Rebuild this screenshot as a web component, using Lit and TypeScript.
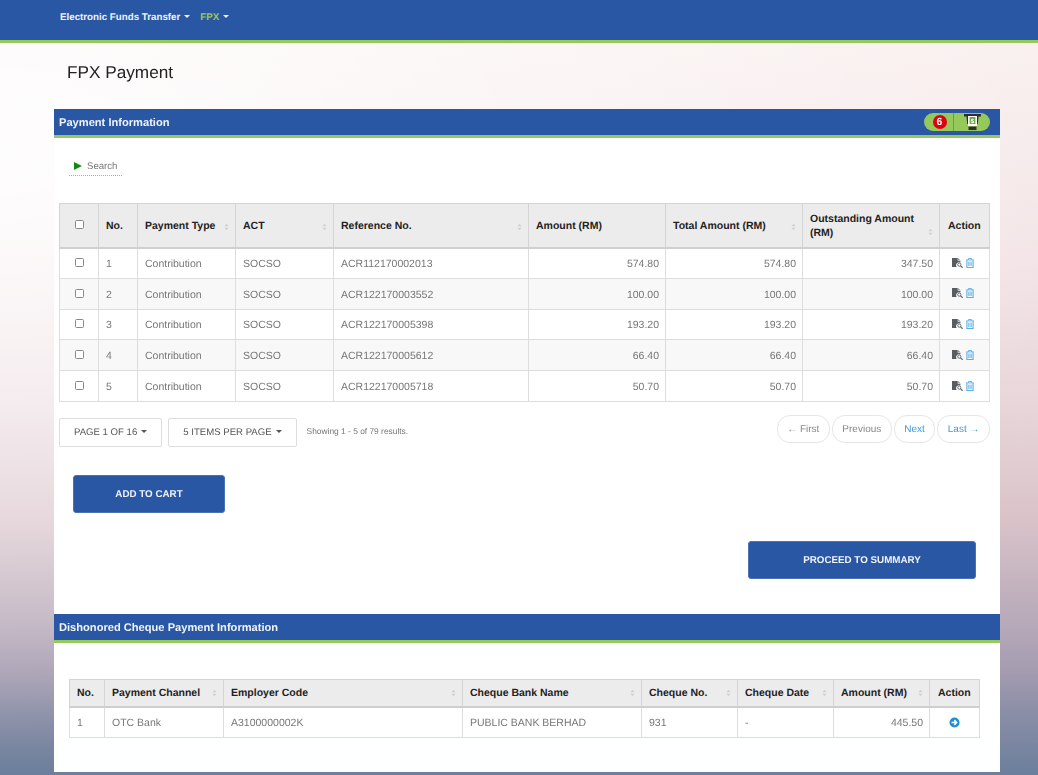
import { LitElement, html, css, svg } from "lit";
import { customElement } from "lit/decorators.js";

const mainCols = [39, 39, 98, 98, 195, 137, 137, 137, 50];
const mainHead: [string, boolean][] = [
  ["No.", false], ["Payment Type", true], ["ACT", true], ["Reference No.", true],
  ["Amount (RM)", false], ["Total Amount (RM)", true], ["Outstanding Amount (RM)", true], ["Action", false],
];
const rows = [
  ["1", "ACR112170002013", "574.80", "574.80", "347.50"],
  ["2", "ACR122170003552", "100.00", "100.00", "100.00"],
  ["3", "ACR122170005398", "193.20", "193.20", "193.20"],
  ["4", "ACR122170005612", "66.40", "66.40", "66.40"],
  ["5", "ACR122170005718", "50.70", "50.70", "50.70"],
];
const chequeCols = [35, 119, 239, 179, 96, 96, 96, 50];
const chequeHead: [string, boolean][] = [
  ["No.", false], ["Payment Channel", true], ["Employer Code", true], ["Cheque Bank Name", true],
  ["Cheque No.", true], ["Cheque Date", true], ["Amount (RM)", true], ["Action", false],
];

const sortIcon = svg`<svg class="sort" viewBox="0 0 6 9" width="5" height="8"><path d="M3 0.5 5.4 3.6H.6zM3 8.5 .6 5.4H5.4z" fill="#d0d0d0"/></svg>`;
const sortIconLow = svg`<svg class="sort low" viewBox="0 0 6 9" width="5" height="8"><path d="M3 0.5 5.4 3.6H.6zM3 8.5 .6 5.4H5.4z" fill="#d0d0d0"/></svg>`;
const docIcon = svg`<svg class="act" viewBox="0 0 11 10" width="11" height="10"><path d="M0 0h6l2.4 2.4v2.2A3 3 0 0 0 4.6 9H0z" fill="#5a5d60"/><path d="M6 .2v2.4h2.4" fill="none" stroke="#fff" stroke-width=".7"/><circle cx="7.3" cy="6.6" r="1.6" fill="none" stroke="#6a6d70" stroke-width="1"/><path d="M8.5 7.8 10.6 9.8" stroke="#6a6d70" stroke-width="1.2"/></svg>`;
const trashIcon = svg`<svg class="act" viewBox="0 0 8 10" width="8" height="10"><path d="M0 1.9h8M2.4 1.8V.5h3.2v1.3" fill="none" stroke="#5aaee5" stroke-width=".9"/><path d="M.9 2.2v7.3h6.2V2.2" fill="none" stroke="#5aaee5" stroke-width="1.1"/><path d="M2.7 3.6v4.4M4 3.6v4.4M5.3 3.6v4.4" stroke="#5aaee5" stroke-width=".8"/></svg>`;
const goIcon = svg`<svg class="go" viewBox="0 0 12 12" width="11" height="11"><circle cx="6" cy="6" r="5.5" fill="#1f8ed8"/><path d="M2.8 6H8M5.8 3.4 8.4 6 5.8 8.6" fill="none" stroke="#fff" stroke-width="1.6"/></svg>`;
const atmIcon = svg`<svg class="atm" viewBox="0 0 17 16" width="17" height="16"><path d="M0 0h17v2.4h-2.5L13.8 10h-1V2.4H4.2V10h-1L2.5 2.4H0z" fill="#2e2e2e"/><path d="M4 2h9v10H4z" fill="#fff"/><rect x="5.6" y="3" width="5.8" height="7" fill="#6fa84a"/><text x="8.5" y="8.6" font-size="6" font-weight="700" text-anchor="middle" fill="#fff" font-family="Liberation Sans">$</text><rect x="4.5" y="12.6" width="8" height="3.4" fill="#2e2e2e"/></svg>`;

@customElement("app-root")
export class AppRoot extends LitElement {
  static styles = css`
    :host {
      display: block; height: 775px; overflow: hidden;
      font-family: "Liberation Sans", Arial, sans-serif; color: #777;
      text-rendering: geometricPrecision;
      background:
        radial-gradient(ellipse 1100px 600px at 0 150px, rgba(255,255,255,.92), rgba(255,255,255,0)),
        linear-gradient(180deg, #f9f0ef 5%, #f3e4e6 34%, #e8d6da 52%, #d9c3c9 67%, #b5a8b8 81%, #a59cb0 86.4%, #8a8ea6 92%, #6b7f9c 100%);
    }
    * { box-sizing: border-box; }
    .nav {
      height: 43px; background: #2a57a3; border-bottom: 3px solid #95c95c;
      padding: 11px 0 0 60px; display: flex; gap: 10px; opacity: .999;
      font-size: 9.75px; font-weight: 700; color: #eef2f8; line-height: 13px;
    }
    .nav .green { color: #95c95c; }
    .caret {
      display: inline-block; width: 0; height: 0; margin-left: 4px; vertical-align: 2px;
      border-left: 3px solid transparent; border-right: 3px solid transparent; border-top: 3px solid currentColor;
    }
    .nav .green .caret { color: #eef2f8; }
    .wrap { margin: 0 38px 0 54px; opacity: .999; }
    .title-bar { height: 66px; padding: 19px 0 0 13px; }
    h1 { margin: 0; font-size: 17.2px; font-weight: 400; line-height: 21px; color: #222; }
    .panel { background: #fff; height: 663px; display: flex; flex-direction: column; }
    .phead {
      height: 29px; flex: none; background: #2a57a3; border-bottom: 3px solid #95c95c;
      color: #f1f4f9; font-weight: 700; font-size: 11.12px; line-height: 28px;
      padding: 0 10px 0 5px; display: flex; justify-content: space-between;
    }
    .pill {
      width: 66px; height: 18px; margin-top: 4px; border-radius: 9px; background: #95c95c;
      display: flex; align-items: center;
    }
    .pill .left { width: 30px; height: 100%; display: flex; align-items: center; justify-content: center; border-right: 1px solid #6f9f45; padding-left: 2px; }
    .pill .right { flex: 1; display: flex; align-items: center; justify-content: center; }
    .atm { display: block; }
    .badge {
      width: 14px; height: 14px; border-radius: 50%; background: #e0000f; color: #fff;
      font-size: 10.5px; font-weight: 700; line-height: 14px; text-align: center;
    }
    .search-row { padding: 19px 0 0 15px; height: 65px; flex: none; }
    .search {
      display: inline-flex; align-items: center; gap: 5px; height: 18px; padding: 0 5px 0 5px;
      border-bottom: 1px dotted #aaa; font-size: 9.6px; color: #777;
    }
    .tri { width: 0; height: 0; border-left: 8px solid #128a12; border-top: 4px solid transparent; border-bottom: 4px solid transparent; }
    table {
      border-collapse: collapse; table-layout: fixed; font-size: 10.5px; background: #fff;
    }
    .t1 { margin-left: 5px; width: 930px; }
    .t2 { margin-left: 15px; width: 910px; }
    th, td { border: 1px solid #ddd; padding: 0 7px; }
    td.r { padding-right: 6px; }
    th { border-color: #d4d4d4; border-bottom: 2px solid #cfcfcf; background: #ececec; color: #222; font-weight: 700; text-align: left; line-height: 14px; position: relative; }
    th:last-child { padding-left: 8px; }
    .t1 th { height: 44px; padding-top: 2px; }
    .t2 th { height: 28px; }
    .t1 td { height: 30.8px; padding-top: 2px; }
    .t2 td { height: 30px; }
    .t1, .t2 { border: 1px solid #ccc; }
    .t1 tbody tr:nth-child(even) td { background: #f8f8f8; }
    .r { text-align: right; }
    .c { text-align: center; }
    th.sorted { padding-right: 17px; }
    .sort { position: absolute; right: 6px; bottom: 16px; }
    .sort.low { bottom: 11px; }
    .t2 .sort { bottom: 9px; }
    .cb { appearance: none; margin: 0 auto 3px; width: 9px; height: 9px; border: 1px solid #888; border-radius: 1.5px; background: #fff; display: block; }
    .acts { display: flex; align-items: center; justify-content: center; gap: 3px; margin: 0 3px 3px 0; }
    .act { display: block; }
    .go { display: block; margin: 0 auto; }
    .pager { height: 73px; flex: none; margin: 0 10px 0 5px; display: flex; align-items: flex-start; }
    .ddl {
      height: 29px; margin-top: 16px; border: 1px solid #ddd; border-radius: 2px; padding: 0 14px;
      font-size: 9.6px; line-height: 27px; color: #555; margin-right: 6px;
    }
    .count { font-size: 8.4px; color: #777; margin: 24px 0 0 4px; line-height: 11px; }
    .links { margin-left: auto; margin-top: 13px; display: flex; gap: 2px; }
    .links span {
      height: 28px; border: 1px solid #e6e6e6; border-radius: 13px; padding: 0 9.5px;
      font-size: 10px; line-height: 27px; color: #888;
    }
    .links .on { color: #3d9be0; }
    .btn {
      display: flex; align-items: center; justify-content: center; background: #2a57a3; color: #f1f4f9;
      font-weight: 700; font-size: 9.8px; border-radius: 3px; height: 38px; border: 1px solid #4b72b4; padding-top: 2px;
    }
    .cart { width: 152px; margin: 0 0 0 19px; flex: none; }
    .proceed { width: 228px; margin: 28px 0 0 694px; flex: none; }
    .phead.second { margin-top: 35px; }
    .t2wrap { padding-top: 36px; }
  `;

  private head(list: [string, boolean][]) {
    return list.map(([t, s]) => html`<th class=${s ? "sorted" : ""}>${t}${s ? (t.length > 20 ? sortIconLow : sortIcon) : ""}</th>`);
  }

  render() {
    return html`
      <div class="nav">
        <span>Electronic Funds Transfer<i class="caret"></i></span>
        <span class="green">FPX<i class="caret"></i></span>
      </div>
      <div class="wrap">
        <div class="title-bar"><h1>FPX Payment</h1></div>
        <div class="panel">
          <div class="phead">
            <span>Payment Information</span>
            <div class="pill">
              <div class="left"><div class="badge">6</div></div>
              <div class="right">${atmIcon}</div>
            </div>
          </div>
          <div class="search-row"><span class="search"><i class="tri"></i>Search</span></div>
          <table class="t1">
            <colgroup>${mainCols.map((w) => html`<col style="width:${w}px" />`)}</colgroup>
            <thead><tr><th class="c"><input class="cb" type="checkbox" /></th>${this.head(mainHead)}</tr></thead>
            <tbody>
              ${rows.map((r) => html`<tr>
                <td class="c"><input class="cb" type="checkbox" /></td>
                <td>${r[0]}</td><td>Contribution</td><td>SOCSO</td><td>${r[1]}</td>
                <td class="r">${r[2]}</td><td class="r">${r[3]}</td><td class="r">${r[4]}</td>
                <td><div class="acts">${docIcon}${trashIcon}</div></td>
              </tr>`)}
            </tbody>
          </table>
          <div class="pager">
            <div class="ddl">PAGE 1 OF 16<i class="caret"></i></div>
            <div class="ddl">5 ITEMS PER PAGE<i class="caret"></i></div>
            <div class="count">Showing 1 - 5 of 79 results.</div>
            <div class="links">
              <span>← First</span><span>Previous</span><span class="on">Next</span><span class="on">Last →</span>
            </div>
          </div>
          <div class="btn cart">ADD TO CART</div>
          <div class="btn proceed">PROCEED TO SUMMARY</div>
          <div class="phead second"><span>Dishonored Cheque Payment Information</span></div>
          <div class="t2wrap">
            <table class="t2">
              <colgroup>${chequeCols.map((w) => html`<col style="width:${w}px" />`)}</colgroup>
              <thead><tr>${this.head(chequeHead)}</tr></thead>
              <tbody><tr>
                <td>1</td><td>OTC Bank</td><td>A3100000002K</td><td>PUBLIC BANK BERHAD</td><td>931</td><td>-</td>
                <td class="r">445.50</td><td class="c">${goIcon}</td>
              </tr></tbody>
            </table>
          </div>
        </div>
      </div>
    `;
  }
}
